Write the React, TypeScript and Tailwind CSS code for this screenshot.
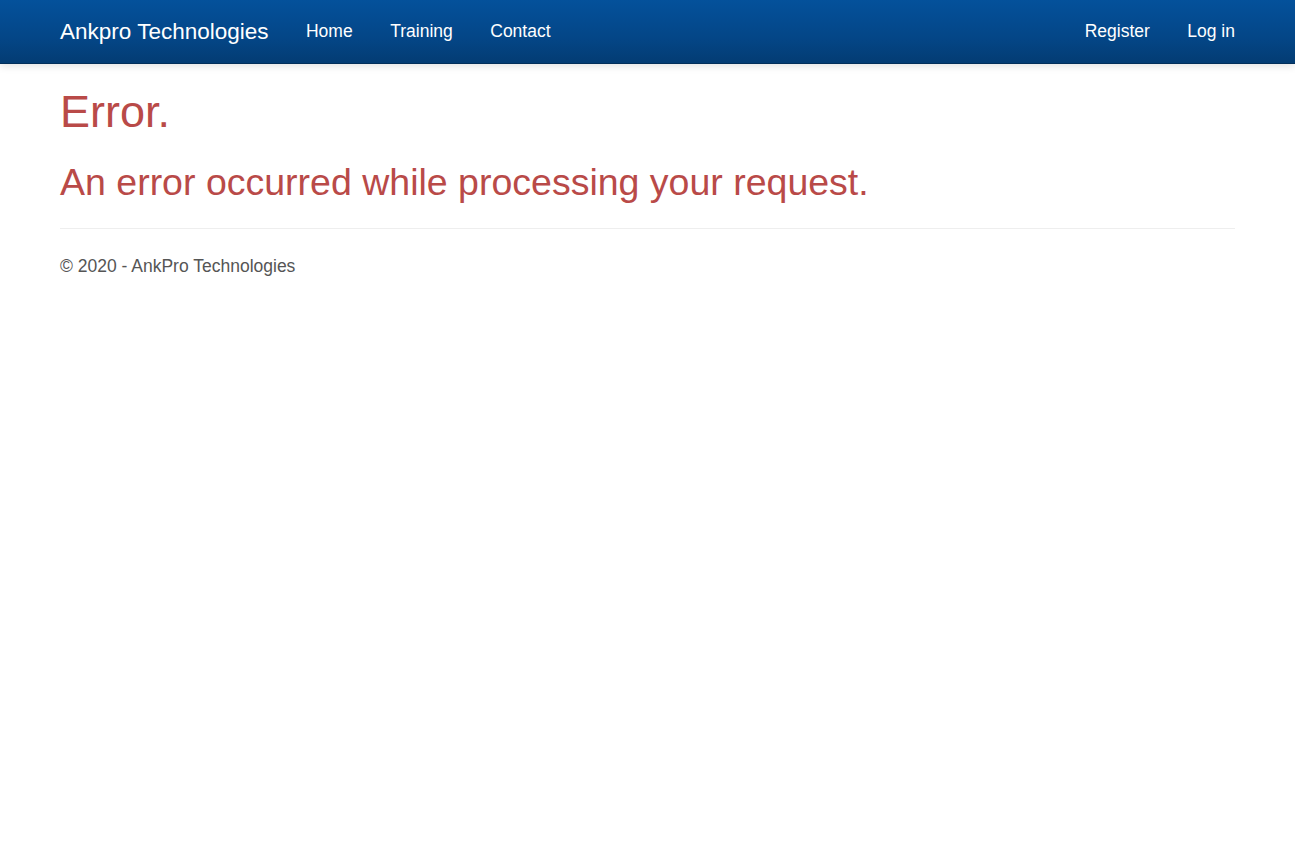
const navItems = ['Home', 'Training', 'Contact'];
const authItems = ['Register', 'Log in'];

export default function App() {
  return (
    <div className="min-h-screen bg-white font-['Liberation_Sans',Arial,sans-serif] text-[17.5px] leading-[25px] text-[#555555]">
      {/* Navbar */}
      <header className="h-[64px] bg-[linear-gradient(#04519b,#044687_60%,#033c73)] border-b border-[#022f5a] shadow-[0_2px_8px_rgba(0,0,0,0.12)]">
        <div className="flex h-full items-center justify-between px-[60px]">
          <div className="flex items-center">
            <a className="text-[22.5px] leading-[25px] text-white mr-[37.5px]">Ankpro Technologies</a>
            <nav className="flex items-center gap-[37.5px]">
              {navItems.map((item) => (
                <a key={item} className="text-white">
                  {item}
                </a>
              ))}
            </nav>
          </div>
          <nav className="flex items-center gap-[37.5px]">
            {authItems.map((item) => (
              <a key={item} className="text-white">
                {item}
              </a>
            ))}
          </nav>
        </div>
      </header>

      {/* Body */}
      <main className="px-[60px]">
        <h1 className="mt-[23px] text-[45px] leading-[49.5px] text-[#b94a48]">Error.</h1>
        <h2 className="mt-[25px] text-[37.5px] leading-[41.25px] text-[#b94a48]">
          An error occurred while processing your request.
        </h2>
        <hr className="mt-[24.75px] border-0 border-t border-[#eeeeee]" />
        <footer className="mt-[25px]">
          <p>© 2020 - AnkPro Technologies</p>
        </footer>
      </main>
    </div>
  );
}
